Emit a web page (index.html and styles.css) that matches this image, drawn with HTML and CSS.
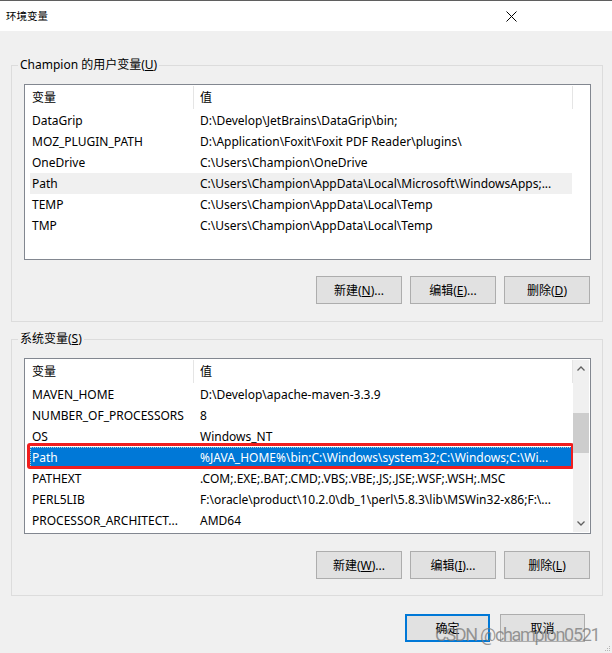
FILE: index.html
```html
<!DOCTYPE html>
<html lang="zh-CN">
<head>
<meta charset="utf-8">
<title>环境变量</title>
<link rel="stylesheet" href="styles.css">
</head>
<body>
<div class="window">
  <div class="titlebar">
    <span class="title">环境变量</span>
    <svg class="close" width="11" height="11" viewBox="0 0 11 11"><path d="M0.5 0.5 L10.5 10.5 M10.5 0.5 L0.5 10.5" stroke="#000" stroke-width="1" fill="none"/></svg>
  </div>
  <div class="content">
    <fieldset class="group group-user">
      <legend>Champion 的用户变量(<u>U</u>)</legend>
      <div class="list">
        <div class="list-body">
          <div class="row header"><div class="cell c1">变量</div><div class="cell c2">值</div></div>
          <div class="row"><div class="cell c1">DataGrip</div><div class="cell c2">D:\Develop\JetBrains\DataGrip\bin;</div></div>
          <div class="row"><div class="cell c1">MOZ_PLUGIN_PATH</div><div class="cell c2">D:\Application\Foxit\Foxit PDF Reader\plugins\</div></div>
          <div class="row"><div class="cell c1">OneDrive</div><div class="cell c2">C:\Users\Champion\OneDrive</div></div>
          <div class="row hover"><div class="cell c1">Path</div><div class="cell c2">C:\Users\Champion\AppData\Local\Microsoft\WindowsApps;...</div></div>
          <div class="row"><div class="cell c1">TEMP</div><div class="cell c2">C:\Users\Champion\AppData\Local\Temp</div></div>
          <div class="row"><div class="cell c1">TMP</div><div class="cell c2">C:\Users\Champion\AppData\Local\Temp</div></div>
        </div>
      </div>
      <div class="buttons">
        <button class="btn">新建(<u>N</u>)...</button>
        <button class="btn">编辑(<u>E</u>)...</button>
        <button class="btn">删除(<u>D</u>)</button>
      </div>
    </fieldset>

    <fieldset class="group group-sys">
      <legend>系统变量(<u>S</u>)</legend>
      <div class="list">
        <div class="list-body">
          <div class="row header"><div class="cell c1">变量</div><div class="cell c2">值</div></div>
          <div class="row"><div class="cell c1">MAVEN_HOME</div><div class="cell c2">D:\Develop\apache-maven-3.3.9</div></div>
          <div class="row"><div class="cell c1">NUMBER_OF_PROCESSORS</div><div class="cell c2">8</div></div>
          <div class="row"><div class="cell c1">OS</div><div class="cell c2">Windows_NT</div></div>
          <div class="row selected"><div class="cell c1">Path</div><div class="cell c2">%JAVA_HOME%\bin;C:\Windows\system32;C:\Windows;C:\Wi...</div><span class="annot"></span></div>
          <div class="row"><div class="cell c1">PATHEXT</div><div class="cell c2">.COM;.EXE;.BAT;.CMD;.VBS;.VBE;.JS;.JSE;.WSF;.WSH;.MSC</div></div>
          <div class="row"><div class="cell c1">PERL5LIB</div><div class="cell c2">F:\oracle\product\10.2.0\db_1\perl\5.8.3\lib\MSWin32-x86;F:\...</div></div>
          <div class="row"><div class="cell c1">PROCESSOR_ARCHITECT...</div><div class="cell c2">AMD64</div></div>
        </div>
        <div class="scrollbar">
          <div class="sb-btn"><svg width="8" height="5" viewBox="0 0 8 5"><path d="M0.5 4.5 L4 1 L7.5 4.5" stroke="#606060" stroke-width="1.3" fill="none"/></svg></div>
          <div class="sb-track"><div class="sb-thumb"></div></div>
          <div class="sb-btn"><svg width="8" height="5" viewBox="0 0 8 5"><path d="M0.5 0.5 L4 4 L7.5 0.5" stroke="#606060" stroke-width="1.3" fill="none"/></svg></div>
        </div>
      </div>
      <div class="buttons">
        <button class="btn">新建(<u>W</u>)...</button>
        <button class="btn">编辑(<u>I</u>)...</button>
        <button class="btn">删除(<u>L</u>)</button>
      </div>
    </fieldset>
  </div>
  <div class="footer">
    <button class="btn btn-default">确定</button>
    <button class="btn">取消</button>
  </div>
  <div class="watermark">CSDN @champion0521</div>
  <svg class="grip" width="6" height="6" viewBox="0 0 6 6"><rect x="4" y="0" width="1" height="1" fill="#b5b5b5"/><rect x="2" y="2" width="1" height="1" fill="#b5b5b5"/><rect x="4" y="2" width="1" height="1" fill="#b5b5b5"/><rect x="0" y="4" width="1" height="1" fill="#b5b5b5"/><rect x="2" y="4" width="1" height="1" fill="#b5b5b5"/><rect x="4" y="4" width="1" height="1" fill="#b5b5b5"/></svg>
</div>
</body>
</html>
```

FILE: styles.css
```css
* { box-sizing: border-box; }
html, body { margin: 0; padding: 0; }
body {
  background: #f0f0f0;
  font-family: "Noto Sans", "Noto Sans CJK SC", sans-serif;
  font-size: 12px;
  color: #000;
}
.window {
  position: relative;
  width: 612px;
  height: 653px;
  border-top: 1px solid #5f5f5f;
  background: #f0f0f0;
  overflow: hidden;
}
.titlebar {
  height: 30px;
  background: #fff;
  display: flex;
  align-items: center;
  justify-content: space-between;
  padding: 0 95px 0 6px;
}
.title {
  font-family: "Noto Sans CJK SC", sans-serif;
  font-size: 10.5px;
  line-height: 14px;
}
.close { display: block; }
.content {
  padding: 0 9px 0 11px;
}
.group {
  margin: 0;
  min-inline-size: 0;
  border: 1px solid #dcdcdc;
  padding: 11px 11px 17px 12px;
  width: 592px;
}
.group-user { margin-top: 26px; }
.group-sys { margin-top: 9px; padding-bottom: 16px; }
.group legend {
  margin-left: -6px;
  padding: 0 2px;
  line-height: 16px;
  font-size: 12px;
}
.list {
  width: 567px;
  height: 176px;
  border: 1px solid #828790;
  background: #fff;
  display: flex;
  overflow: hidden;
}
.list-body {
  flex: 1;
  padding-left: 5px;
  overflow: hidden;
}
.row {
  position: relative;
  width: 542px;
  height: 21px;
  display: grid;
  grid-template-columns: 164px 378px;
  line-height: 21px;
  white-space: nowrap;
}
.cell { overflow: hidden; }
.c1 { padding-left: 2px; }
.c2 { padding-left: 6px; }
.row.header {
  height: 25px;
  grid-template-columns: 164px 379px;
  align-items: center;
}
.row.header .cell {
  height: 23px;
  line-height: 23px;
  border-right: 1px solid #e5e5e5;
}
.row.hover { background: #f0f0f0; }
.row.selected {
  background: #0078d7;
  color: #fff;
  outline: 1px dotted rgba(255, 240, 200, 0.7);
  outline-offset: -1px;
}
.annot {
  position: absolute;
  left: -3px;
  top: -4px;
  right: -2px;
  bottom: -1px;
  border: 3px solid #f01e1e;
  border-radius: 3px;
}
.scrollbar {
  width: 16px;
  margin: 1px 1px 1px 0;
  background: #f0f0f0;
  display: flex;
  flex-direction: column;
}
.sb-btn {
  height: 17px;
  display: flex;
  align-items: center;
  justify-content: center;
}
.sb-track { flex: 1; }
.sb-thumb {
  margin-top: 36px;
  height: 40px;
  background: #cdcdcd;
}
.buttons {
  display: flex;
  justify-content: flex-end;
  gap: 8px;
  margin-top: 16px;
  padding-right: 1px;
}
.group-sys .buttons { margin-top: 17px; }
.btn {
  width: 86px;
  height: 28px;
  background: #e1e1e1;
  border: 1px solid #adadad;
  font-family: "Noto Sans", "Noto Sans CJK SC", sans-serif;
  font-size: 12px;
  color: #000;
  padding: 0;
  margin: 0;
}
.btn u { text-underline-offset: 1px; }
.footer {
  display: flex;
  justify-content: flex-end;
  gap: 10px;
  margin-top: 18px;
  padding-right: 27px;
}
.footer .btn { width: 85px; }
.btn-default {
  border: 2px solid #0078d7;
}
.watermark {
  position: absolute;
  left: 435px;
  top: 624px;
  font-family: Roboto, sans-serif;
  font-size: 18px;
  line-height: 20px;
  letter-spacing: -1.3px;
  color: rgba(120, 120, 120, 0.75);
  white-space: nowrap;
}
.grip {
  position: absolute;
  right: 1px;
  bottom: 1px;
}
```
